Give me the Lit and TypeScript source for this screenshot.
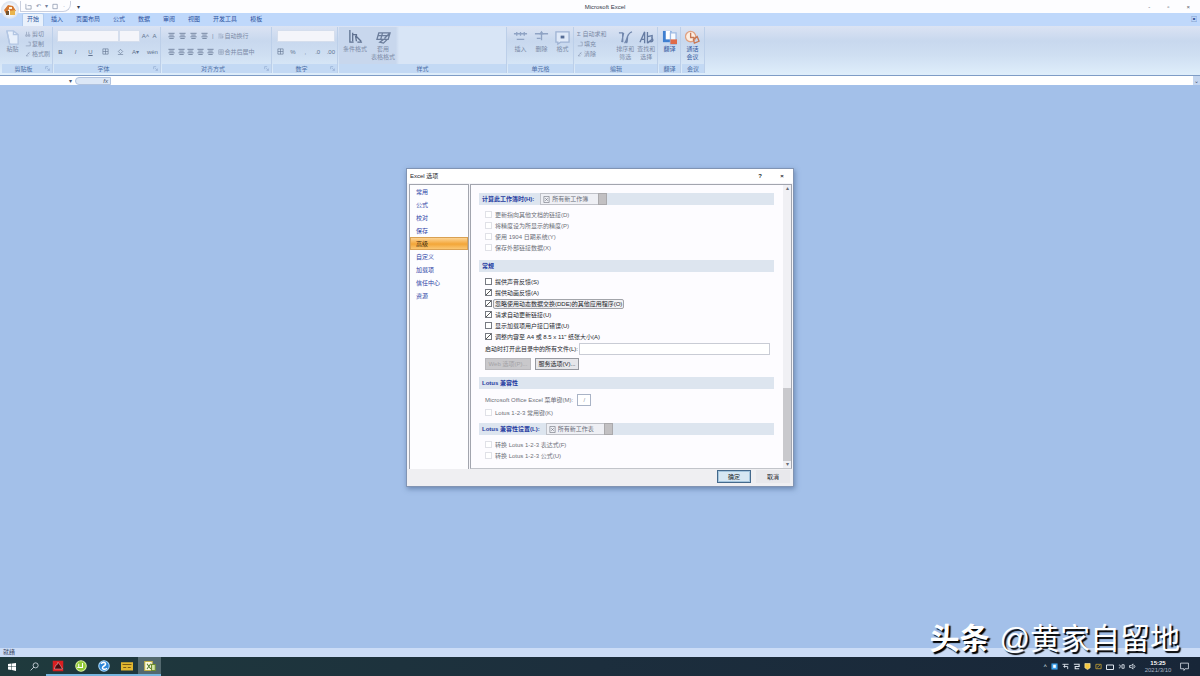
import { LitElement, html, css, svg } from "lit";
import { customElement } from "lit/decorators.js";
import { classMap } from "lit/directives/class-map.js";

const shared = css`
  * { box-sizing: border-box; }
  button, select, input {
    font: inherit; color: inherit; margin: 0; padding: 0; border: 0;
    background: none; border-radius: 0; appearance: none; min-width: 0; min-height: 0;
  }
  svg { display: block; flex: none; }
`;

const icon = (size: number, body: unknown) => html`
  <svg width=${size} height=${size} viewBox="0 0 16 16" fill="none" stroke="currentColor"
    stroke-width="1.4" aria-hidden="true">${body}</svg>`;

const glyphs = {
  paste: svg`<path d="M2 1h7l5 4v10H5z" fill="#e8f0fb" stroke="#b3c6e3"/><path d="M2 1l3 14M9 1v4h5" stroke="#b3c6e3"/>`,
  cut: svg`<path d="M4 2v7M10 2v7M2 10h4v4H2zM9 10h4v4H9z"/>`,
  copy: svg`<path d="M2 13h12M9 3h5v10"/>`,
  brush: svg`<path d="M3 13L12 3M3 13h6M8 5l4 4"/>`,
  border: svg`<path d="M2 2h12v12H2zM8 2v12M2 8h12"/>`,
  fill: svg`<path d="M3 8l5-5 5 5-5 5zM2 15h12"/>`,
  lines: svg`<path d="M1 3h14M3 7h10M1 11h14M3 15h10" stroke-width="1.8"/>`,
  wrap: svg`<path d="M1 3h9M1 8h12v5H5M1 13h3M13 3v3"/>`,
  cond: svg`<path d="M2 0v13h4M5 3v9M5 5h4v3M8 6l1 6M9 7l5 5M10 13h5" stroke="#5f7291"/>`,
  table: svg`<path d="M3 3h12l-2 7H1zM2 6h12M7 3L5 10M9 9l5-5M4 13l4-3h4l-4 4z" stroke="#6b7d9b"/>`,
  insert: svg`<path d="M1 4h14M4 2v4M8 2v4M12 2v4M4 10h8" stroke="#8fa3c4"/>`,
  remove: svg`<path d="M1 4h14M8 2v9M6 5l2-3 2 3M3 9h4" stroke="#8fa3c4"/>`,
  format: svg`<path d="M1 2h14v11H6l-3 2v-2H1z" fill="#dfe9f8" stroke="#9fb3d3"/><path d="M6 6h4v3H6z" fill="#566d96" stroke="none"/>`,
  sort: svg`<path d="M1 3h4v10M6 3L4 13M7 14C10 12 9 3 15 2M11 5c-2 3 0 6-2 9" stroke="#7187ad"/>`,
  find: svg`<path d="M1 13L6 2v12M2 10h4M9 2v12M9 7l5-1v4l-5 4M11 12c4 2 5-2 2-4" stroke="#667ca3"/>`,
  translate: svg`<path d="M1 1h9v12H1z" fill="#3f7fd0" stroke="none"/><path d="M4 1h5v9H4z" fill="#fff" stroke="none"/><path d="M9 3h6v12H9z" fill="#f8fbff" stroke="#9fbbe4"/><path d="M9 10h7v5H9z" fill="#df6b48" stroke="none"/>`,
  meet: svg`<circle cx="6" cy="7" r="5.5" fill="#fdeee2" stroke="#e0a182"/><path d="M6 3v5h4M9 10l4-3 2 5-5 2z" stroke="#c77753"/>`,
};

const cap = (text: string) => html`<span>${text}</span>`;
const small = (g: unknown, text: string) => html`<button class="row">${icon(6, g)}${text}</button>`;
const large = (g: unknown, lines: string[], strong = false) => html`
  <button class=${classMap({ large: true, strong })}>${icon(15, g)}${lines.map(cap)}</button>`;
const glyph = (text: string, label: string) => html`<button class="glyph" aria-label=${label}>${text}</button>`;
const glyphIcon = (g: unknown, label: string) => html`<button class="glyph" aria-label=${label}>${icon(7, g)}</button>`;
const launch = (text: string) => html`<div class="label"><span>${text}</span><button class="launch" aria-label="${text}设置">
  ${icon(5, svg`<path d="M2 10V2h8M7 7l7 7M14 8v6H8" stroke-width="2"/>`)}</button></div>`;

@customElement("excel-ribbon")
export class ExcelRibbon extends LitElement {
  static styles = [shared, css`
    :host { display: block; font-size: 6px; line-height: 8px; }
    .title { display: flex; height: 13px; align-items: center; background: #fdfdff; color: #333b4b; }
    .quick { display: flex; flex: 1; align-items: center; gap: 6px; padding-left: 20px; }
    .quick-box { display: flex; gap: 4px; align-items: center; height: 11px; padding: 0 5px 0 4px;
      border: 1px solid #c9cfdf; border-top: 0; border-radius: 0 0 8px 0; color: #72809c; }
    .window { display: flex; flex: 1; justify-content: flex-end; gap: 17px; padding-right: 10px; color: #555d6d; }
    .orb { position: absolute; left: 1px; top: 1px; width: 18px; height: 18px; border-radius: 9px;
      background: radial-gradient(circle, #fff 30%, #d3dcec 75%, #b5c5df); display: grid; place-items: center; }
    .tabs { display: flex; height: 13px; padding-left: 22px; background: #bfd8fb; color: #3d5d9c; }
    .tab { height: 13px; padding: 0 7px 2px 6px; color: #2d52a0; }
    .tab.on { background: #e9f1fc; border: 1px solid #b1cbee; border-bottom: 0; border-radius: 2px 2px 0 0; padding: 0 4px 2px; margin-right: 1px; }
    .tabs .help { margin-left: auto; padding: 0 3px 2px; }
    .ribbon { display: flex; gap: 1px; height: 50px; padding: 1px 2px 2px;
      background: linear-gradient(#dbe3f3, #c8d8ee 30%, #cfdff2 60%, #dfeefb);
      border-bottom: 1px solid #7e9cc6; color: #7b8aa6; }
    .group { display: flex; flex-direction: column; flex: none; border-right: 1px solid #bccfe9; }
    .body { display: flex; flex: 1; align-items: flex-start; padding: 3px 2px 0; gap: 4px; }
    .label { display: flex; align-items: center; justify-content: center; height: 9px; background: #c3d9f4; color: #4a6da6; }
    .label span { flex: 1; text-align: center; }
    .launch { width: 7px; color: #8ea7cd; }
    .clip { width: 51px; } .font { width: 107px; } .align { width: 110px; } .num { width: 65px; }
    .style { width: 168px; background: linear-gradient(90deg, #c8d7ed 34%, #d8e5f6 36%); }
    .cells { width: 66px; } .edit { width: 83px; } .lang { width: 22px; } .meeting { width: 23px; }
    .font .body { padding-left: 3px; }
    .align .body { padding-left: 6px; padding-right: 8px; }
    .num .body { padding-left: 4px; }
    .style .body, .cells .body { padding-left: 4px; }
    .edit .body { gap: 3px; }
    .edit .stack { width: 37px; }
    .stack { display: flex; flex-direction: column; gap: 2px; }
    .stack.wide { gap: 5px; flex: 1; }
    .line { display: flex; align-items: center; justify-content: space-between; height: 11px; gap: 1px; }
    .row { display: flex; align-items: center; gap: 1px; height: 8px; line-height: 8px; white-space: nowrap; }
    .large { display: flex; flex-direction: column; align-items: center; line-height: 8px; min-width: 17px; white-space: nowrap; }
    .strong { color: #3459a0; }
    .glyph { min-width: 7px; color: #61738f; }
    .b { font-weight: bold; } .i { font-style: italic; } .u { text-decoration: underline; }
    select.box { height: 12px; background: #f4f5fa; border: 1px solid #d5deed; }
    .family { width: 62px; } .size { width: 21px; } .numfmt { width: 100%; }
    .join { display: flex; }
    .formula { display: flex; align-items: center; height: 9px; background: #fff; color: #44516b; }
    .cellref { width: 66px; height: 9px; }
    .fx { display: flex; justify-content: space-between; width: 36px; height: 8px; padding-right: 2px; border: 1px solid #b1c3df; border-radius: 4px 0 0 4px; background: #dce7f6; line-height: 6px; font-style: italic; }
    .entry { flex: 1; height: 9px; }
    .expand { width: 7px; height: 9px; background: #c3d5ef; }
    .drop { width: 9px; line-height: 8px; }
  `];

  render() {
    const tabs = ["插入", "页面布局", "公式", "数据", "审阅", "视图", "开发工具", "模板"];
    return html`
      <header class="title">
        <div class="quick"><div class="quick-box">
          ${icon(7, svg`<path d="M2 2v12h12V6H6"/>`)}<span>↶</span><span>▾</span>
          ${icon(7, svg`<path d="M2 3h10v10H2z"/>`)}<span>·</span></div><span>▾</span></div>
        <div class="name">Microsoft Excel</div>
        <div class="window"><span>-</span><span>▫</span><span>×</span></div>
      </header>
      <button class="orb" aria-label="Office">
        <svg width="14" height="14" viewBox="0 0 14 14"><path d="M1 7l4-5 5 1 3 5-5 1-2-3-3 5z" fill="#d47731"/><path d="M7 8l5-1v5H7z" fill="#e9b44c"/><path d="M3 8h3v4H3z" fill="#73532f"/><path d="M6 4h3v2H6z" fill="#fff4dc"/></svg>
      </button>
      <nav class="tabs">
        <button class="tab on">开始</button>
        ${tabs.map((t) => html`<button class="tab">${t}</button>`)}
        <button class="help" aria-label="帮助">▣</button>
      </nav>
      <div class="ribbon">
        <section class="group clip"><div class="body">
          ${large(glyphs.paste, ["粘贴"])}
          <div class="stack">${small(glyphs.cut, "剪切")}${small(glyphs.copy, "复制")}${small(glyphs.brush, "格式刷")}</div>
        </div>${launch("剪贴板")}</section>
        <section class="group font"><div class="body"><div class="stack wide">
          <div class="line"><div class="join"><select class="box family" aria-label="字体"></select><select class="box size" aria-label="字号"></select></div>${glyph("A˄", "增大字号")}${glyph("A", "减小字号")}</div>
          <div class="line"><button class="glyph b">B</button><button class="glyph i">I</button><button class="glyph u">U</button>${glyphIcon(glyphs.border, "边框")}${glyphIcon(glyphs.fill, "填充颜色")}${glyph("A▾", "字体颜色")}${glyph("wén", "拼音")}</div>
        </div></div>${launch("字体")}</section>
        <section class="group align"><div class="body">
          <div class="stack wide">
            <div class="line">${["顶端对齐", "垂直居中", "底端对齐", "方向"].map((l) => glyphIcon(glyphs.lines, l))}<span>|</span></div>
            <div class="line">${["左对齐", "居中", "右对齐", "减少缩进", "增加缩进"].map((l) => glyphIcon(glyphs.lines, l))}</div>
          </div>
          <div class="stack wide">
            <div class="line">${small(glyphs.wrap, "自动换行")}</div>
            <div class="line">${small(glyphs.border, "合并后居中")}</div>
          </div>
        </div>${launch("对齐方式")}</section>
        <section class="group num"><div class="body"><div class="stack wide">
          <div class="line"><select class="box numfmt" aria-label="数字格式"></select></div>
          <div class="line">${glyphIcon(glyphs.border, "货币")}${glyph("%", "百分比")}${glyph(",", "千位分隔")}${glyph(".0", "增加小数")}${glyph(".00", "减少小数")}</div>
        </div></div>${launch("数字")}</section>
        <section class="group style"><div class="body">${large(glyphs.cond, ["条件格式"])}${large(glyphs.table, ["套用", "表格格式"])}</div><div class="label">样式</div></section>
        <section class="group cells"><div class="body">${large(glyphs.insert, ["插入"])}${large(glyphs.remove, ["删除"])}${large(glyphs.format, ["格式"])}</div><div class="label">单元格</div></section>
        <section class="group edit"><div class="body">
          <div class="stack"><button class="row">Σ 自动求和</button>${small(glyphs.copy, "填充")}${small(glyphs.brush, "清除")}</div>
          ${large(glyphs.sort, ["排序和", "筛选"])}${large(glyphs.find, ["查找和", "选择"])}
        </div><div class="label">编辑</div></section>
        <section class="group lang"><div class="body">${large(glyphs.translate, ["翻译"], true)}</div><div class="label">翻译</div></section>
        <section class="group meeting"><div class="body">${large(glyphs.meet, ["通话", "会议"], true)}</div><div class="label">会议</div></section>
      </div>
      <div class="formula">
        <input class="cellref" aria-label="名称框"><button class="drop" aria-label="名称">▾</button>
        <button class="fx" aria-label="插入函数"><span></span>fx</button><input class="entry" aria-label="编辑栏"><button class="expand" aria-label="展开编辑栏">⌄</button>
      </div>`;
  }
}

interface Option { text: string; on?: boolean; off?: boolean; focus?: boolean; }

@customElement("options-dialog")
export class OptionsDialog extends LitElement {
  static styles = [shared, css`
    :host { display: block; width: 388px; font-size: 6px; line-height: 8px; color: #24262c;
      background: #efeff2; border: 1px solid #8194b3; box-shadow: 1px 2px 5px #49648fa0; }
    .title { display: flex; align-items: center; height: 14px; padding: 0 0 0 3px; background: #fff; }
    .title span { flex: 1; }
    .title button { width: 22px; text-align: center; font-weight: bold; }
    .main { display: flex; gap: 1px; padding: 1px 1px 0 2px; background: #f5f5f9; }
    .nav { width: 60px; background: #fdfdff; border: 1px solid #a2a5ae; border-bottom: 0; color: #2c3fa5; }
    .nav button { display: block; width: 100%; height: 13px; padding-left: 6px; text-align: left; line-height: 12px; }
    .nav .on { background: linear-gradient(#fcd495, #f3a638 55%, #fbc773); border: 1px solid #d9a153; line-height: 10px; color: #3b2a10; padding-left: 5px; }
    .page { flex: 1; display: flex; border: 1px solid #a2a5ae; border-bottom-color: #c2c4ca; background: #fdfcff; }
    .content { flex: 1; padding: 8px 9px 2px 8px; }
    h2 { display: flex; align-items: center; gap: 6px; margin: 0; height: 12px; padding-left: 3px; background: #dde5ef; color: #1f3aa0; font-size: 6px; line-height: 8px; }
    .pick { display: flex; align-items: center; height: 12px; padding-left: 2px; gap: 2px; border: 1px solid #bfc1c8; border-right: 0; background: #eeeff4; color: #686c78; }
    select { height: 10px; width: 44px; font-weight: normal; }
    .arrow { width: 9px; height: 12px; background: #c2c0c2; border: 1px solid #aaa9ac; }
    .list { padding: 4px 0 7px 6px; }
    .list.short { padding: 4px 0 5px 6px; }
    .item { display: flex; align-items: center; gap: 3px; height: 11px; white-space: nowrap; }
    .item.off { color: #6c6f78; }
    .item input { width: 7px; height: 7px; border: 1px solid #777a82; background: #fff; }
    .item input:checked { background: linear-gradient(135deg, #fff 40%, #555 45%, #555 55%, #fff 60%); }
    .item.off input { border-color: #e0e1e7; }
    .item.focus label { border: 1px solid #a2a4aa; border-radius: 2px; padding: 0 1px; background: #f1f1f4; margin-left: -2px; }
    .field { display: flex; align-items: center; gap: 4px; height: 14px; white-space: nowrap; }
    .field.start { gap: 1px; padding-right: 4px; }
    .field input { height: 12px; border: 1px solid #c9ccd5; background: #fff; }
    .field .grow { flex: 1; }
    .field .key { width: 14px; text-align: center; color: #9296a1; border-color: #a9b3c6; }
    .dim { color: #6c6f78; }
    .actions { display: flex; gap: 4px; padding: 2px 0 0; }
    .actions button { height: 12px; width: 44px; border: 1px solid #96989f; background: #e6e6ea; }
    .actions .off { width: 46px; background: #c9c8cb; border-color: #b9b8bc; color: #a3a2a6; }
    .scroll { display: flex; flex-direction: column; width: 8px; background: #f0f0f4; color: #686c75; text-align: center; line-height: 7px; }
    .scroll i { display: block; margin-top: auto; height: 73px; background: #c9c9cd; }
    .foot { display: flex; justify-content: flex-end; gap: 5px; padding: 1px 3px 3px; }
    .foot button { width: 34px; height: 13px; background: #e8e8ec; }
    .foot .ok { border: 1px solid #44698c; background: #d6e7f3; box-shadow: inset 0 0 0 1px #a5c6de; }
  `];

  private item(o: Option, id: string) {
    return html`<div class=${classMap({ item: true, off: !!o.off, focus: !!o.focus })}>
      <input type="checkbox" id=${id} .checked=${!!o.on} ?disabled=${!!o.off}><label for=${id}>${o.text}</label></div>`;
  }

  private heading(text: string, id = "", choice = "") {
    return html`<h2>${choice
      ? html`<label for=${id}>${text}</label><div class="pick">${icon(7, svg`<path d="M2 1h12v14H2zM5 5l6 6M11 5l-6 6"/>`)}<select id=${id}><option>${choice}</option></select><span class="arrow"></span></div>`
      : text}</h2>`;
  }

  render() {
    const nav = ["常用", "公式", "校对", "保存", "高级", "自定义", "加载项", "信任中心", "资源"];
    const calc: Option[] = ["更新指向其他文档的链接(D)", "将精度设为所显示的精度(P)", "使用 1904 日期系统(Y)", "保存外部链接数据(X)"].map((text) => ({ text, off: true }));
    const general: Option[] = [
      { text: "提供声音反馈(S)" },
      { text: "提供动画反馈(A)", on: true },
      { text: "忽略使用动态数据交换(DDE)的其他应用程序(O)", on: true, focus: true },
      { text: "请求自动更新链接(U)", on: true },
      { text: "显示加载项用户接口错误(U)" },
      { text: "调整内容至 A4 或 8.5 x 11\" 纸张大小(A)", on: true },
    ];
    const lotus: Option[] = ["转换 Lotus 1-2-3 表达式(F)", "转换 Lotus 1-2-3 公式(U)"].map((text) => ({ text, off: true }));
    return html`
      <div class="title"><span>Excel 选项</span><button aria-label="帮助">?</button><button aria-label="关闭">×</button></div>
      <div class="main">
        <nav class="nav">${nav.map((n) => html`<button class=${classMap({ on: n === "高级" })}>${n}</button>`)}</nav>
        <div class="page">
          <div class="content">
            ${this.heading("计算此工作簿时(H):", "book", "所有新工作簿")}
            <div class="list">${calc.map((o, i) => this.item(o, `calc${i}`))}</div>
            ${this.heading("常规")}
            <div class="list">
              ${general.map((o, i) => this.item(o, `gen${i}`))}
              <div class="field start"><label for="start">启动时打开此目录中的所有文件(L):</label><input class="grow" id="start"></div>
              <div class="actions"><button class="off" disabled>Web 选项(P)...</button><button>服务选项(V)...</button></div>
            </div>
            ${this.heading("Lotus 兼容性")}
            <div class="list short">
              <div class="field dim"><label for="menu">Microsoft Office Excel 菜单键(M):</label><input class="key" id="menu" value="/"></div>
              ${this.item({ text: "Lotus 1-2-3 常用键(K)", off: true }, "keys")}
            </div>
            ${this.heading("Lotus 兼容性设置(L):", "sheet", "所有新工作表")}
            <div class="list short">${lotus.map((o, i) => this.item(o, `lotus${i}`))}</div>
          </div>
          <div class="scroll"><span>▴</span><i></i><span>▾</span></div>
        </div>
      </div>
      <div class="foot"><button class="ok">确定</button><button>取消</button></div>`;
  }
}

@customElement("desktop-taskbar")
export class DesktopTaskbar extends LitElement {
  static styles = [shared, css`
    :host { display: flex; align-items: stretch; height: 19px; color: #dfe6ee; font-size: 6px; line-height: 7px;
      background: linear-gradient(90deg, #1f3a3d, #1c2e3d 50%, #182638); }
    button { display: grid; place-items: center; width: 23px; }
    .app { border-bottom: 2px solid #76b5de; }
    .on { background: #53696f; }
    .tray { display: flex; align-items: center; gap: 4px; margin-left: auto; padding-right: 11px; }
    .clock { width: 28px; margin: 0 4px; text-align: center; color: #aab4c4; white-space: nowrap; display: flex; flex-direction: column; align-items: center; }
    .clock b { color: #fff; }
  `];
  render() {
    const apps = [
      svg`<path d="M1 1h14v14H1z" fill="#d91e20" stroke="none"/><path d="M3 12l2-5 2-1 1-3 3 4 3 5z" fill="#4c0b10" stroke="#fff" stroke-width=".5"/>`,
      svg`<circle cx="8" cy="8" r="7" fill="#91c936" stroke="#d8ef9f"/><path d="M5 5v5h5V4M3 10h3" stroke="#fff"/>`,
      svg`<circle cx="8" cy="8" r="7" fill="#2b86d8" stroke="#a9d7fa"/><path d="M4 5c4-4 9 0 4 3s0 6 4 3" stroke="#fff" stroke-width="2"/>`,
      svg`<path d="M0 3h16v11H0z" fill="#e3b72f" stroke="none"/><path d="M2 6h12M3 10h4M9 10h4" stroke="#7a5c16"/>`,
      svg`<path d="M1 2h10v12H1z" fill="#fffbe0" stroke="#c2b148"/><path d="M4 5l5 7M9 5l-5 7" stroke="#557c2b"/><path d="M10 6h5v8h-5z" fill="#d4e3a5" stroke="#6d8d2f"/>`,
    ];
    return html`
      <button aria-label="开始">${icon(8, svg`<path d="M0 2l7-1v6H0zM8 1l8-1v7H8zM0 8h7v6l-7-1zM8 8h8v8l-8-2z" fill="#fff" stroke="none"/>`)}</button>
      <button aria-label="搜索">${icon(9, svg`<circle cx="10" cy="6" r="4.5"/><path d="M7 9l-6 6"/>`)}</button>
      ${apps.map((a, i) => html`<button class=${classMap({ app: true, on: i === 4 })} aria-label="应用 ${i + 1}">${icon(12, a)}</button>`)}
      <div class="tray">
        <span>˄</span>
        ${icon(7, svg`<path d="M1 1h14v14H1z" fill="#3da0ec" stroke="none"/><path d="M5 4h6v7H5z" fill="#fff" stroke="none"/>`)}
        ${icon(7, svg`<path d="M1 3h14M3 8h10v6M6 3v8" stroke-width="2"/>`)}
        ${icon(7, svg`<path d="M2 3h12v5H5v5h9" stroke-width="2.5"/>`)}
        ${icon(7, svg`<path d="M2 1h12v10l-6 4-6-4z" fill="#f5c842" stroke="#fff0b0"/>`)}
        ${icon(7, svg`<path d="M2 3h12v10H2zM5 10l6-5" stroke="#b99834" stroke-width="2"/>`)}
        ${icon(8, svg`<path d="M1 4h14v9H1z" stroke-width="2"/>`)}
        ${icon(7, svg`<path d="M2 5c4-3 5 8 0 6M9 4h5v8H9z" stroke-width="2"/>`)}
        ${icon(7, svg`<path d="M1 6h4l4-4v12l-4-4H1zM12 5c2 2 2 4 0 6" stroke-width="2"/>`)}
        <div class="clock"><b>15:25</b><span>2021/3/10</span></div>
        ${icon(9, svg`<path d="M1 2h14v10H9l-2 3v-3H1z"/>`)}
      </div>`;
  }
}

@customElement("app-root")
export class AppRoot extends LitElement {
  static styles = [shared, css`
    :host { display: flex; flex-direction: column; position: relative; height: 100vh; overflow: hidden;
      font-family: "Liberation Sans", "Noto Sans CJK SC", sans-serif; background: #a3c0e9; }
    .workspace { flex: 1; display: flex; justify-content: center; align-items: flex-start; padding-top: 83px; background: #a3c0e9; }
    .status { height: 9px; padding-left: 3px; background: #cbdcf6; color: #33405a; font-size: 6px; line-height: 9px; }
    .mark { position: absolute; right: 20px; bottom: 18px; display: flex; gap: 10px; color: #fff;
      font-size: 30px; line-height: 38px; text-shadow: 2px 2px 1px #000; white-space: nowrap; }
  `];
  render() {
    return html`
      <excel-ribbon></excel-ribbon>
      <main class="workspace"><options-dialog role="dialog" aria-label="Excel 选项"></options-dialog></main>
      <footer class="status">就绪</footer>
      <desktop-taskbar></desktop-taskbar>
      <div class="mark"><b>头条</b><span>@黄家自留地</span></div>`;
  }
}
